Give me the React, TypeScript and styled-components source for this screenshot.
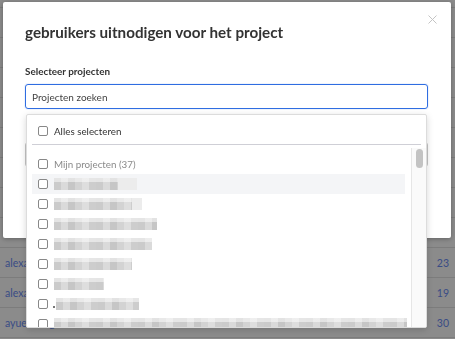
import React from "react";
import styled, { createGlobalStyle } from "styled-components";

const GlobalStyle = createGlobalStyle`
  html, body { margin: 0; padding: 0; }
  body {
    font-family: Lato, "Noto Sans", sans-serif;
    background: #fff;
    width: 455px;
    height: 339px;
    overflow: hidden;
  }
  * { box-sizing: border-box; }
`;

/* ---------- background page ---------- */
const Page = styled.div`
  width: 455px;
  height: 339px;
  overflow: hidden;
  padding-top: 7px;
`;

const TableRow = styled.div`
  height: 30px;
  border-top: 1px solid #e4e4e4;
  display: flex;
  align-items: center;
  justify-content: space-between;
  padding: 0 6px 0 5px;
  font-size: 10.5px;
  color: #6a8cf5;
`;

/* ---------- overlay / modal ---------- */
const Overlay = styled.div`
  position: fixed;
  inset: 0;
  background: rgba(0, 0, 0, 0.455);
  display: flex;
  align-items: flex-start;
  padding: 2px 0 0 3px;
`;

const Modal = styled.div`
  position: relative;
  width: 448px;
  height: 236px;
  background: #fff;
  border-radius: 2px;
  box-shadow: 0 1px 5px rgba(0, 0, 0, 0.3);
  padding: 19px 23px 0 22px;
  display: flex;
  flex-direction: column;
`;

const Close = styled.button`
  position: absolute;
  top: 13px;
  right: 14px;
  width: 9px;
  height: 9px;
  padding: 0;
  border: 0;
  background: none;
  display: flex;
`;

const Title = styled.h2`
  margin: 0;
  font-size: 15.2px;
  line-height: 22px;
  font-weight: 700;
  color: #333;
`;

const Label = styled.label`
  margin-top: 21px;
  font-size: 9.9px;
  line-height: 15px;
  font-weight: 700;
  color: #333;
`;

const Field = styled.div`
  position: relative;
  margin-top: 5px;
  display: flex;
  flex-direction: column;
`;

const SearchInput = styled.input`
  height: 25px;
  width: 100%;
  border: 1px solid #2f6de1;
  border-radius: 3px;
  padding: 0 6px;
  font-family: Lato, "Noto Sans", sans-serif;
  font-size: 10px;
  color: #444;
  outline: none;
  box-shadow: 0 0 0 1px rgba(47, 109, 225, 0.08);
  &::placeholder { color: #444; opacity: 1; }
`;

const HiddenSelect = styled.div`
  margin-top: 33px;
  height: 25px;
  border: 1px solid #c4c4c4;
  border-radius: 3px;
`;

const Dropdown = styled.div`
  position: absolute;
  top: 30px;
  left: 1px;
  right: 1px;
  height: 214px;
  background: #fff;
  border: 1px solid #dcdcdc;
  border-radius: 2px;
  box-shadow: 0 2px 7px rgba(0, 0, 0, 0.16);
  z-index: 2;
  display: flex;
  flex-direction: column;
  overflow: hidden;
`;

const SelectAllRow = styled.div`
  height: 20px;
  margin-top: 6px;
  padding-left: 11px;
  display: flex;
  align-items: center;
  gap: 6px;
  font-size: 9.8px;
  color: #333;
`;

const Divider = styled.div`
  height: 1px;
  margin: 3px 5px 0;
  background: #cfcfd6;
`;

const Body = styled.div`
  flex: 1;
  margin-top: 3px;
  display: flex;
  min-height: 0;
`;

const List = styled.div`
  flex: 1;
  padding: 6px 6px 0 5px;
  overflow: hidden;
`;

const Track = styled.div`
  width: 15px;
  background: #fafafa;
  border-left: 1px solid #e6e6e6;
  padding: 1px 0 0 4px;
`;

const Thumb = styled.div`
  width: 7px;
  height: 19px;
  border-radius: 4px;
  background: #c3c3c3;
`;

const Item = styled.div<{ $hover?: boolean }>`
  height: 20px;
  padding-left: 6px;
  display: flex;
  align-items: center;
  gap: 6px;
  background: ${(p) => (p.$hover ? "#f4f5f7" : "transparent")};
  font-size: 9.8px;
  color: #333;
`;

const GroupText = styled.span`
  color: #8a8a8a;
`;

const Check = styled.span`
  flex: none;
  width: 10px;
  height: 10px;
  border: 1px solid #888;
  border-radius: 2px;
  background: #fff;
`;

const Redacted = styled.span<{ $w: number }>`
  display: inline-block;
  width: ${(p) => p.$w}px;
  height: 12px;
  margin-left: 1px;
  background:
    linear-gradient(to bottom, rgba(255,255,255,0.5) 0 35%, transparent 35%),
    repeating-linear-gradient(
      90deg,
      #cbcbcb 0 7px,
      #dadada 7px 14px,
      #c6c6c6 14px 21px,
      #d3d3d3 21px 28px,
      #dedede 28px 35px,
      #cdcdcd 35px 42px
    );
  filter: blur(0.5px);
`;

const Tail = styled.span<{ $w: number }>`
  display: inline-block;
  width: ${(p) => p.$w}px;
  height: 12px;
  background: #ececec;
  filter: blur(0.5px);
`;

const Blur = styled.span`
  display: flex;
  align-items: center;
  margin-left: -1px;
`;

const Dot = styled.span`
  width: 2px;
  height: 2px;
  margin-top: 6px;
  background: #777;
`;

const rows: { w: number; tail: number; dot?: boolean }[] = [
  { w: 64, tail: 19 },
  { w: 78, tail: 10 },
  { w: 103, tail: 0 },
  { w: 98, tail: 0 },
  { w: 78, tail: 0 },
  { w: 50, tail: 0 },
  { w: 83, tail: 0, dot: true },
  { w: 353, tail: 0 },
];

const bgRows = [
  { name: "", num: "" },
  { name: "", num: "" },
  { name: "", num: "" },
  { name: "", num: "" },
  { name: "", num: "" },
  { name: "", num: "" },
  { name: "", num: "" },
  { name: "", num: "" },
  { name: "alexander.bakker", num: "23" },
  { name: "alexandra.visser", num: "19" },
  { name: "ayuel.deng", num: "30" },
  { name: "", num: "" },
];

export default function App() {
  return (
    <>
      <GlobalStyle />
      <Page>
        {bgRows.map((r, i) => (
          <TableRow key={i}>
            <span>{r.name}</span>
            <span>{r.num}</span>
          </TableRow>
        ))}
      </Page>
      <Overlay>
        <Modal>
          <Close aria-label="Sluiten">
            <svg width="9" height="9" viewBox="0 0 9 9">
              <path d="M0.5 0.5 L8.5 8.5 M8.5 0.5 L0.5 8.5" stroke="#c4c4c4" strokeWidth="1" fill="none" />
            </svg>
          </Close>
          <Title>gebruikers uitnodigen voor het project</Title>
          <Label>Selecteer projecten</Label>
          <Field>
            <SearchInput placeholder="Projecten zoeken" />
            <HiddenSelect />
            <Dropdown>
              <SelectAllRow>
                <Check />
                <span>Alles selecteren</span>
              </SelectAllRow>
              <Divider />
              <Body>
                <List>
                  <Item>
                    <Check />
                    <GroupText>Mijn projecten (37)</GroupText>
                  </Item>
                  {rows.map((r, i) => (
                    <Item key={i} $hover={i === 0}>
                      <Check />
                      <Blur>
                        {r.dot ? <Dot /> : null}
                        <Redacted $w={r.w} />
                        {r.tail ? <Tail $w={r.tail} /> : null}
                      </Blur>
                    </Item>
                  ))}
                </List>
                <Track>
                  <Thumb />
                </Track>
              </Body>
            </Dropdown>
          </Field>
        </Modal>
      </Overlay>
    </>
  );
}
